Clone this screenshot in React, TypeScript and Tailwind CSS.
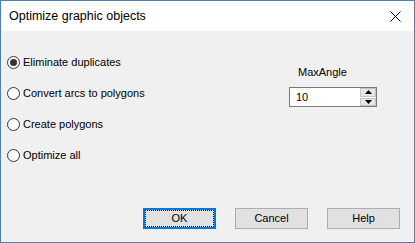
import React from "react";

function Radio({ checked, label }: { checked?: boolean; label: string }) {
  return (
    <div className="flex items-center h-[13px]">
      <div className="w-[13px] h-[13px] rounded-full border border-[#333333] bg-white flex items-center justify-center">
        {checked && <div className="w-[7px] h-[7px] rounded-full bg-[#333333]" />}
      </div>
      <span className="ml-[3px] text-[11px] leading-[13px] text-black">{label}</span>
    </div>
  );
}

function Button({ label, focused }: { label: string; focused?: boolean }) {
  return (
    <div
      className={`relative w-[73px] h-[21px] bg-[#e1e1e1] flex items-center justify-center text-[11px] text-black ${
        focused ? "border-2 border-[#0078d7]" : "border border-[#adadad]"
      }`}
    >
      {focused && <div className="absolute inset-0 border border-dotted border-black" />}
      <span className="relative">{label}</span>
    </div>
  );
}

function Spinner() {
  return (
    <div className="w-[16px] h-[18px] flex flex-col gap-[1px] bg-white">
      <div className="flex-1 bg-[#e6e6e6] border border-[#c4c4c4] flex items-center justify-center">
        <svg width="7" height="4" viewBox="0 0 7 4">
          <path d="M3.5 0 L7 4 L0 4 Z" fill="#000" />
        </svg>
      </div>
      <div className="flex-1 bg-[#e6e6e6] border border-[#c4c4c4] flex items-center justify-center">
        <svg width="7" height="4" viewBox="0 0 7 4">
          <path d="M0 0 L7 0 L3.5 4 Z" fill="#000" />
        </svg>
      </div>
    </div>
  );
}

export default function App() {
  return (
    <div
      className="w-[415px] h-[243px] border border-[#4f7fae] bg-[#f0f0f0] flex flex-col"
      style={{ fontFamily: '"Liberation Sans", Arial, sans-serif' }}
    >
      {/* Title bar */}
      <div className="h-[30px] bg-white flex items-center justify-between pl-[8px] pr-[13px]">
        <span className="text-[12.5px] text-black">Optimize graphic objects</span>
        <svg width="11" height="11" viewBox="0 0 11 11">
          <path d="M0.5 0.5 L10.5 10.5 M10.5 0.5 L0.5 10.5" stroke="#000" strokeWidth="1" />
        </svg>
      </div>

      <div className="flex-1 flex flex-col">
        <div className="flex">
          {/* Options */}
          <div className="flex flex-col gap-[18px] pt-[25px] pl-[6px]">
            <Radio checked label="Eliminate duplicates" />
            <Radio label="Convert arcs to polygons" />
            <Radio label="Create polygons" />
            <Radio label="Optimize all" />
          </div>

          {/* MaxAngle */}
          <div className="ml-auto mr-[37px] pt-[35px] flex flex-col">
            <span className="pl-[9px] text-[11px] leading-[13px] text-black">MaxAngle</span>
            <div className="mt-[8px] w-[88px] h-[20px] border border-[#7a7a7a] bg-white flex items-center">
              <span className="flex-1 pl-[6px] text-[11px] text-black">10</span>
              <Spinner />
            </div>
          </div>
        </div>

        {/* Buttons */}
        <div className="mt-auto flex justify-end gap-[19px] pr-[14px] pb-[13px]">
          <Button label="OK" focused />
          <Button label="Cancel" />
          <Button label="Help" />
        </div>
      </div>
    </div>
  );
}
